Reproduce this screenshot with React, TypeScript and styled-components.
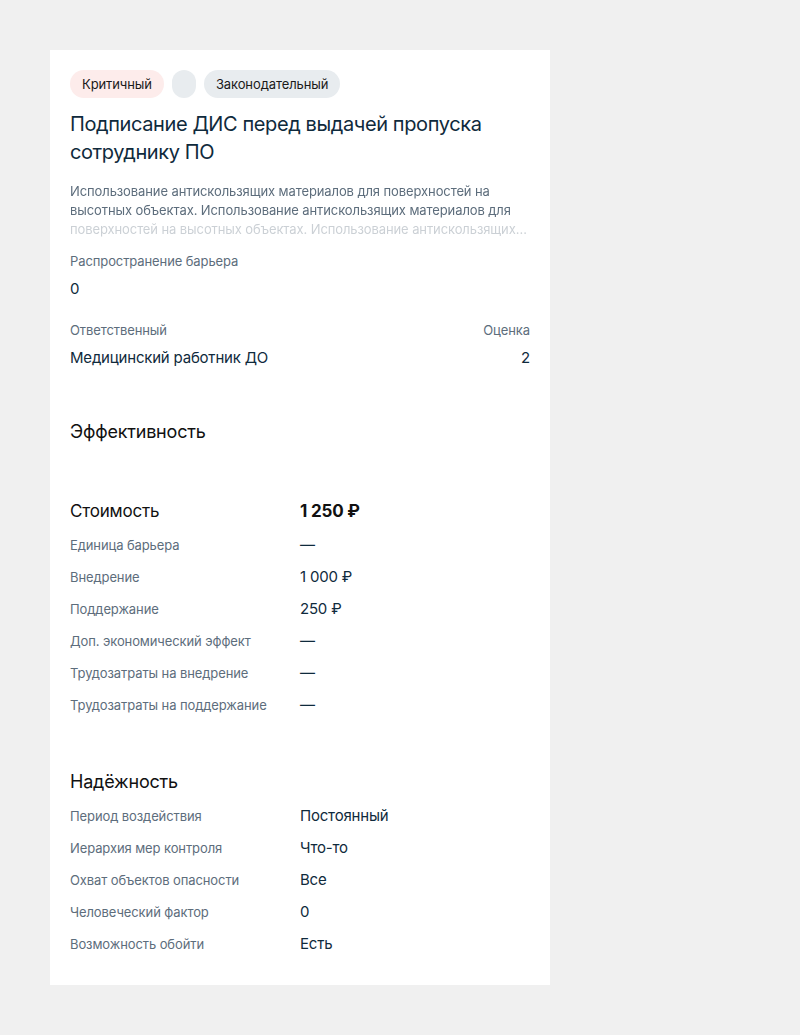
import {Fragment} from "react";
import styled, {createGlobalStyle} from "styled-components";

const GlobalStyle = createGlobalStyle`
  body {
    margin: 0;
    background: #f0f0f0;
    font-family: Inter, "Noto Sans", sans-serif;
  }
`;

const Page = styled.div`
  padding: 50px;
`;

const Card = styled.div`
  width: 500px;
  box-sizing: border-box;
  background: #ffffff;
  padding: 20px 20px 32px;
  color: #0f2a3c;
`;

const Tags = styled.div`
  display: flex;
  gap: 8px;
`;

const Tag = styled.span<{tone: "red" | "gray"}>`
  display: inline-flex;
  align-items: center;
  height: 28px;
  min-width: 24px;
  box-sizing: border-box;
  padding: 0 12px;
  border-radius: 14px;
  font-size: 13px;
  letter-spacing: -0.1px;
  color: #1a1a1a;
  background: ${(p) => (p.tone === "red" ? "#fdeceb" : "#e8ecef")};
`;

const Title = styled.h1`
  margin: 12px 0 0;
  font-size: 20px;
  line-height: 28px;
  font-weight: 400;
  letter-spacing: -0.4px;
  color: #0f2a3c;
`;

const Description = styled.p`
  margin: 16px 0 0;
  font-size: 13px;
  line-height: 19px;
  letter-spacing: -0.1px;
  color: #5d6d7c;
  display: -webkit-box;
  -webkit-line-clamp: 3;
  -webkit-box-orient: vertical;
  overflow: hidden;
  -webkit-mask-image: linear-gradient(to bottom, #000 36px, rgba(0, 0, 0, 0.32) 41px);
  mask-image: linear-gradient(to bottom, #000 36px, rgba(0, 0, 0, 0.32) 41px);
`;

const Field = styled.div<{gapTop: number}>`
  margin-top: ${(p) => p.gapTop}px;
  display: flex;
  justify-content: space-between;
`;

const FieldCol = styled.div<{right?: boolean}>`
  display: flex;
  flex-direction: column;
  gap: 10px;
  align-items: ${(p) => (p.right ? "flex-end" : "flex-start")};
`;

const Label = styled.span`
  font-size: 13px;
  line-height: 18px;
  letter-spacing: -0.1px;
  color: #5d6d7c;
`;

const Value = styled.span`
  font-size: 15px;
  line-height: 18px;
  letter-spacing: -0.2px;
  color: #0f2a3c;
`;

const SectionTitle = styled.h2`
  margin: 0;
  font-size: 18px;
  line-height: 24px;
  font-weight: 400;
  letter-spacing: -0.2px;
  color: #111;
`;

const Section = styled.section<{gapTop: number}>`
  margin-top: ${(p) => p.gapTop}px;
`;

const Grid = styled.div<{gapTop?: number}>`
  display: grid;
  grid-template-columns: 230px 1fr;
  row-gap: 14px;
  align-items: baseline;
  margin-top: ${(p) => p.gapTop ?? 0}px;
`;

const CostLabel = styled.span`
  font-size: 17px;
  line-height: 22px;
  letter-spacing: -0.2px;
  color: #111;
`;

const CostValue = styled.span`
  font-size: 17px;
  line-height: 22px;
  font-weight: 700;
  letter-spacing: -0.2px;
  color: #111;
`;

const cost = [
  ["Единица барьера", "—"],
  ["Внедрение", "1 000 ₽"],
  ["Поддержание", "250 ₽"],
  ["Доп. экономический эффект", "—"],
  ["Трудозатраты на внедрение", "—"],
  ["Трудозатраты на поддержание", "—"],
];

const reliability = [
  ["Период воздействия", "Постоянный"],
  ["Иерархия мер контроля", "Что-то"],
  ["Охват объектов опасности", "Все"],
  ["Человеческий фактор", "0"],
  ["Возможность обойти", "Есть"],
];

const descr =
  "Использование антискользящих материалов для поверхностей на высотных объектах. Использование антискользящих материалов для поверхностей на высотных объектах. Использование антискользящих материалов для поверхностей на высотных объектах.";

export default function App() {
  return (
    <>
      <GlobalStyle />
      <Page>
        <Card>
          <Tags>
            <Tag tone="red">Критичный</Tag>
            <Tag tone="gray" />
            <Tag tone="gray">Законодательный</Tag>
          </Tags>
          <Title>Подписание ДИС перед выдачей пропуска сотруднику ПО</Title>
          <Description>{descr}</Description>
          <Field gapTop={13}>
            <FieldCol>
              <Label>Распространение барьера</Label>
              <Value>0</Value>
            </FieldCol>
          </Field>
          <Field gapTop={23}>
            <FieldCol>
              <Label>Ответственный</Label>
              <Value>Медицинский работник ДО</Value>
            </FieldCol>
            <FieldCol right>
              <Label>Оценка</Label>
              <Value>2</Value>
            </FieldCol>
          </Field>
          <Section gapTop={53}>
            <SectionTitle>Эффективность</SectionTitle>
          </Section>
          <Section gapTop={56}>
            <Grid>
              <CostLabel>Стоимость</CostLabel>
              <CostValue>1 250 ₽</CostValue>
              {cost.map(([l, v]) => (
                <Fragment key={l}>
                  <Label>{l}</Label>
                  <Value>{v}</Value>
                </Fragment>
              ))}
            </Grid>
          </Section>
          <Section gapTop={56}>
            <SectionTitle>Надёжность</SectionTitle>
            <Grid gapTop={13}>
              {reliability.map(([l, v]) => (
                <Fragment key={l}>
                  <Label>{l}</Label>
                  <Value>{v}</Value>
                </Fragment>
              ))}
            </Grid>
          </Section>
        </Card>
      </Page>
    </>
  );
}
